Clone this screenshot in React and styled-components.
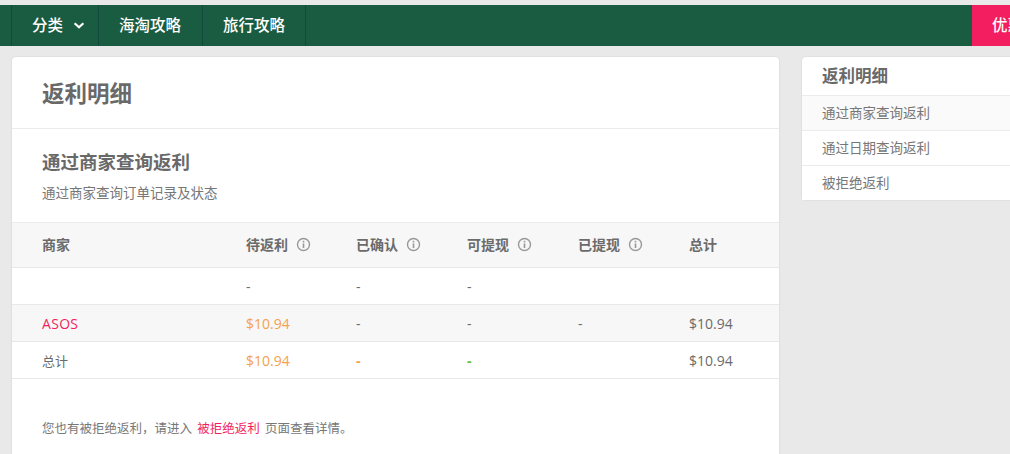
import React from "react";
import styled, { createGlobalStyle } from "styled-components";

const GlobalStyle = createGlobalStyle`
  html, body {
    margin: 0;
    height: 100%;
    overflow: hidden;
    background: #e9e9e9;
  }
  body {
    font-family: "Open Sans", "Noto Sans CJK SC", sans-serif;
    color: #6b6b6b;
  }
`;

const Page = styled.div`
  width: 1010px;
  height: 454px;
  overflow: hidden;
  padding-top: 5px;
  box-sizing: border-box;
`;

const TopBar = styled.div`
  display: flex;
  justify-content: space-between;
  height: 41px;
  background: #1a5c41;
  padding-left: 11px;
`;

const NavList = styled.div`
  display: flex;
  border-left: 1px solid #124a3c;
`;

const NavItem = styled.div`
  display: flex;
  align-items: center;
  gap: 10px;
  width: ${(p) => p.w}px;
  box-sizing: border-box;
  padding: 0 0 2px 20px;
  border-right: 1px solid #124a3c;
  color: #fff;
  font-size: 15.5px;
  font-weight: 500;
`;

const PromoButton = styled.div`
  display: flex;
  align-items: center;
  box-sizing: border-box;
  width: 38px;
  padding: 0 0 2px 20px;
  background: #f21e60;
  color: #fff;
  font-size: 15.5px;
  font-weight: 500;
  white-space: nowrap;
  overflow: hidden;
`;

const Content = styled.div`
  display: flex;
  align-items: flex-start;
  gap: 23px;
  padding: 11px 0 0 12px;
`;

const MainCard = styled.div`
  flex: none;
  width: 767px;
  height: 420px;
  background: #fff;
  border-radius: 4px 4px 0 0;
  box-shadow: 0 0 2px rgba(0, 0, 0, 0.12);
`;

const CardHeader = styled.div`
  display: flex;
  align-items: center;
  height: 71px;
  padding: 0 0 0 30px;
  border-bottom: 1px solid #ebebeb;
`;

const PageTitle = styled.h1`
  margin: 0 0 1px;
  font-size: 22.5px;
  font-weight: 700;
  color: #696969;
`;

const Section = styled.div`
  height: 93px;
  padding: 20px 30px 0;
  box-sizing: border-box;
`;

const SectionTitle = styled.h2`
  margin: 0;
  font-size: 18.5px;
  line-height: 26px;
  font-weight: 700;
  color: #696969;
`;

const SectionText = styled.p`
  margin: 9px 0 0;
  font-size: 13.5px;
  line-height: 18px;
  color: #777;
`;

const Row = styled.div`
  display: grid;
  grid-template-columns: 234px 110px 111px 111px 111px 90px;
  align-items: center;
  height: ${(p) => (p.head ? 42 : 36)}px;
  padding-bottom: ${(p) => (p.head ? 2 : 0)}px;
  background: ${(p) => (p.shade ? "#f7f7f7" : "#fff")};
  border-top: ${(p) => (p.head ? "1px solid #ebebeb" : "none")};
  border-bottom: 1px solid #e8e8e8;
  font-weight: ${(p) => (p.head ? 700 : 400)};
  & > *:first-child {
    padding-left: 30px;
  }
`;

const Cell = styled.div`
  display: flex;
  align-items: center;
  gap: 8px;
  color: ${(p) => p.color || "#6b6b6b"};
  font-size: ${(p) => p.size || 14}px;
  font-weight: ${(p) => p.weight || "inherit"};
  letter-spacing: ${(p) => p.spacing || 0}px;
`;

const InfoIcon = styled.svg`
  width: 15px;
  height: 15px;
  margin-top: 1px;
  color: #999;
`;

const Note = styled.p`
  margin: 41px 0 0 30px;
  font-size: 12.5px;
  line-height: 18px;
  color: #777;
`;

const RedText = styled.span`
  color: #f21e60;
  margin: 0 2px;
`;

const SideCard = styled.div`
  flex: none;
  width: 260px;
  background: #fff;
  border-radius: 4px 0 0 4px;
  box-shadow: 0 0 2px rgba(0, 0, 0, 0.12);
`;

const SideTitle = styled.div`
  display: flex;
  align-items: center;
  height: 38px;
  padding: 0 0 2px 20px;
  box-sizing: border-box;
  font-size: 16.5px;
  font-weight: 700;
  color: #696969;
`;

const SideItem = styled.div`
  display: flex;
  align-items: center;
  box-sizing: border-box;
  height: 35px;
  padding: 0 0 2px 20px;
  border-top: 1px solid #ebebeb;
  background: ${(p) => (p.active ? "#fafafa" : "#fff")};
  font-size: 13.5px;
  color: #777;
`;

const Info = () => (
  <InfoIcon viewBox="0 0 15 15" fill="none">
    <circle cx="7.5" cy="7.5" r="6" stroke="currentColor" strokeWidth="1.4" />
    <rect x="6.7" y="6.4" width="1.6" height="4.6" fill="currentColor" />
    <rect x="6.7" y="3.8" width="1.6" height="1.6" fill="currentColor" />
  </InfoIcon>
);

const Chevron = () => (
  <svg width="12" height="12" viewBox="0 0 12 12" fill="none">
    <path d="M1.6 4.2 6 8.2l4.4-4" stroke="#fff" strokeWidth="2.2" />
  </svg>
);

const heads = ["待返利", "已确认", "可提现", "已提现"];
const orange = "#f5a14e";
const green = "#5fbf2f";

export default function App() {
  return (
    <Page>
      <GlobalStyle />
      <TopBar>
        <NavList>
          <NavItem w={87}>
            分类 <Chevron />
          </NavItem>
          <NavItem w={104}>海淘攻略</NavItem>
          <NavItem w={103}>旅行攻略</NavItem>
        </NavList>
        <PromoButton>优惠活动</PromoButton>
      </TopBar>
      <Content>
        <MainCard>
          <CardHeader>
            <PageTitle>返利明细</PageTitle>
          </CardHeader>
          <Section>
            <SectionTitle>通过商家查询返利</SectionTitle>
            <SectionText>通过商家查询订单记录及状态</SectionText>
          </Section>
          <Row head shade>
            <Cell>商家</Cell>
            {heads.map((h) => (
              <Cell key={h}>
                {h} <Info />
              </Cell>
            ))}
            <Cell>总计</Cell>
          </Row>
          <Row>
            <Cell />
            <Cell>-</Cell>
            <Cell>-</Cell>
            <Cell>-</Cell>
            <Cell />
            <Cell />
          </Row>
          <Row shade>
            <Cell color="#f21e60" spacing={0.3}>ASOS</Cell>
            <Cell color={orange}>$10.94</Cell>
            <Cell>-</Cell>
            <Cell>-</Cell>
            <Cell>-</Cell>
            <Cell>$10.94</Cell>
          </Row>
          <Row>
            <Cell size={13}>总计</Cell>
            <Cell color={orange}>$10.94</Cell>
            <Cell color={orange} weight={700}>-</Cell>
            <Cell color={green} weight={700}>-</Cell>
            <Cell />
            <Cell>$10.94</Cell>
          </Row>
          <Note>
            您也有被拒绝返利，请进入 <RedText>被拒绝返利</RedText> 页面查看详情。
          </Note>
        </MainCard>
        <SideCard>
          <SideTitle>返利明细</SideTitle>
          <SideItem active>通过商家查询返利</SideItem>
          <SideItem>通过日期查询返利</SideItem>
          <SideItem>被拒绝返利</SideItem>
        </SideCard>
      </Content>
    </Page>
  );
}
